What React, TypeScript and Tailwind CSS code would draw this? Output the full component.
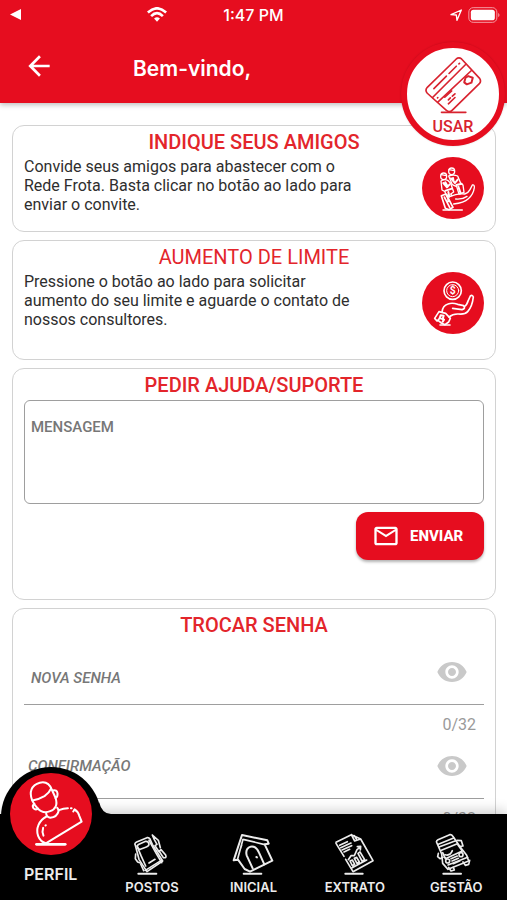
import React from 'react'
import { MdArrowBack, MdOutlineEmail, MdVisibility } from 'react-icons/md'

interface CardProps {
  title: string
  titleClass?: string
  className?: string
  children: React.ReactNode
}

const Card: React.FC<CardProps> = ({ title, titleClass = 'font-medium', className = '', children }) => (
  <section className={`rounded-xl border border-[#d2d2d2] px-[11px] pt-1 ${className}`}>
    <h2 className={`mb-[3px] text-center text-[20px] leading-6 text-[#e3252b] ${titleClass}`}>{title}</h2>
    {children}
  </section>
)

interface ActionCardProps {
  title: string
  titleClass?: string
  className?: string
  text: string
  label: string
  icon: React.ReactNode
}

const ActionCard: React.FC<ActionCardProps> = ({ title, titleClass, className, text, label, icon }) => (
  <Card title={title} titleClass={titleClass} className={className}>
    <div className="flex items-start justify-between">
      <p className="max-w-[345px] text-[16px] leading-[19px] text-[#2e2e2e]">{text}</p>
      <button type="button" aria-label={label} className="size-[62px] shrink-0 rounded-full bg-[#e60d1f] text-white">
        {icon}
      </button>
    </div>
  </Card>
)

interface PasswordFieldProps {
  id: string
  label: string
  className?: string
}

const PasswordField: React.FC<PasswordFieldProps> = ({ id, label, className = '' }) => (
  <div>
    <div className="flex h-[49px] items-start justify-between border-b border-[#9e9e9e] pr-4">
      <input
        id={id}
        type="password"
        maxLength={32}
        aria-label={label}
        placeholder={label}
        className={`h-8 flex-1 bg-transparent text-[15px] font-medium italic outline-none placeholder:text-[#777777] ${className}`}
      />
      <button type="button" aria-label="Mostrar senha" className="text-[#c9c9c9]">
        <MdVisibility size={32} />
      </button>
    </div>
    <p className="h-[45px] pt-2 pr-2 text-right text-[16px] leading-6 text-[#9a9a9a]">0/32</p>
  </div>
)

const WifiIcon = () => (
  <svg viewBox="0 0 60 46" className="h-[15px] w-5" fill="none" stroke="currentColor" strokeWidth="8">
    <path d="M2 17Q30-9 58 17" />
    <path d="M12 28Q30 10 48 28" />
    <path d="M21 35Q30 28 39 35L30 45Z" fill="currentColor" stroke="none" />
  </svg>
)

const CardIcon = () => (
  <svg viewBox="0 0 176 176" className="size-[58px] shrink-0" fill="none" stroke="#d8232f" strokeWidth="5" strokeLinecap="round" strokeLinejoin="round">
    <path d="M98 9L10 95Q2 104 10 113L68 165Q77 173 86 164L168 84Q175 76 168 67L114 9Q106 2 98 9Z" />
    <path d="M26 126L127 25M42 140L144 44" />
    <path d="M30 99L68 61M76 53L98 31M106 24L108 22" />
    <path d="M134 61L148 66L144 81L130 86L122 80L126 66Z" strokeWidth="6" />
    <path d="M63 125L84 106M74 133L80 127M86 122L94 115M74 145L94 126M41 127L42 126" />
    <path d="M53 171H127" />
  </svg>
)

const FriendsIcon = () => (
  <svg viewBox="0 0 186 186" className="size-full" fill="none" stroke="currentColor" strokeWidth="4" strokeLinecap="round" strokeLinejoin="round">
    <ellipse cx="65" cy="58" rx="9" ry="10" />
    <ellipse cx="89" cy="43" rx="9" ry="10" />
    <path d="M58 53L73 56M81 38L97 41" />
    <path d="M57 72Q67 65 77 70L86 79L95 105L86 111L90 116L75 120L68 103L60 99Z" />
    <path d="M80 57Q94 52 107 57L116 79L123 84L126 106L111 111L104 89L91 83Z" />
    <path d="M64 78L75 91L83 82M71 101L90 95M87 64L99 78L107 68M103 84L119 80M109 89L116 109M79 105L82 119M93 63L95 74M70 76L76 86" strokeWidth="6" />
    <path d="M58 116L72 111L93 151L81 158L70 154ZM67 120L83 151M76 114L79 133" strokeWidth="5" />
    <path d="M82 119L101 113Q112 110 128 111Q139 108 144 98L151 84Q158 82 157 92Q154 113 139 125Q126 137 95 141" />
    <path d="M101 126Q121 128 135 118" />
    <path d="M63 159H121" />
  </svg>
)

const CoinHandIcon = () => (
  <svg viewBox="0 0 186 186" className="size-full" fill="none" stroke="currentColor" strokeWidth="5" strokeLinecap="round" strokeLinejoin="round">
    <circle cx="92" cy="56" r="26" />
    <circle cx="92" cy="56" r="18" strokeWidth="3" />
    <text x="92" y="67" textAnchor="middle" fontSize="31" fontWeight="700" fill="currentColor" stroke="none">$</text>
    <path d="M60 120Q62 101 78 96Q91 91 107 97L125 101Q132 110 120 113L92 109" />
    <path d="M127 104Q135 99 139 85L145 72Q151 67 154 75Q151 103 137 119Q129 128 109 126Q93 125 81 135" />
    <path d="M51 119L38 139L45 147L53 139M51 119L71 124L85 139L80 150L69 158L58 153L49 146" />
    <path d="M56 130L65 131L62 141L53 138ZM66 143L62 149" strokeWidth="6" />
    <path d="M54 159H84" />
  </svg>
)

const ProfileIcon = () => (
  <svg viewBox="3 4 245 245" className="size-full" fill="none" stroke="currentColor" strokeWidth="6" strokeLinecap="round" strokeLinejoin="round">
    <path d="M69 85C60 62 66 40 92 33C112 28 122 38 128 54L139 78C146 99 139 113 123 118C105 126 92 117 84 108C77 101 73 94 69 85Z" />
    <path d="M70 86Q91 82 106 73Q120 64 126 50" />
    <path d="M131 56Q143 53 145 65Q146 76 139 79M76 96Q68 101 73 109Q79 116 87 110" />
    <path d="M111 123Q111 136 123 138Q144 135 148 118Q148 112 144 108" />
    <path d="M149 115Q163 109 176 109M185 109L187 109M196 113Q206 118 210 132L217 149L110 214" />
    <path d="M112 134C90 145 79 171 87 192Q94 210 110 214" />
    <path d="M102 168Q98 179 103 191M110 160L109 161M192 119L196 113" />
    <path d="M82 217H168" strokeWidth="8" />
  </svg>
)

const PumpIcon = () => (
  <svg viewBox="0 0 126 126" className="size-[42px]" fill="none" stroke="currentColor" strokeWidth="5" strokeLinecap="round" strokeLinejoin="round">
    <path d="M13 37Q9 31 17 27L48 14Q54 13 57 18L64 34L95 84L48 116L24 79Z" />
    <path d="M20 43Q17 37 24 34L44 25Q52 24 54 33Q54 39 46 42L28 49Q22 50 20 43Z" />
    <path d="M64 6L70 20L78 34L72 38L84 56L90 50L104 66Q108 76 97 74L84 54M64 6L82 22L88 44" />
    <path d="M18 39L30 68L44 99M54 22L76 62L92 89M14 63L13 77L20 87L26 89M29 93L38 113M43 112L91 82M54 90L72 79" />
    <path d="M22 122H76" strokeWidth="6" />
  </svg>
)

const HouseIcon = () => (
  <svg viewBox="0 0 126 126" className="size-[42px]" fill="none" stroke="currentColor" strokeWidth="6" strokeLinecap="round" strokeLinejoin="round">
    <path d="M30 6L106 22L110 32L98 34L121 83L54 116L38 108L18 80L5 82Z" />
    <path d="M33 19L16 81M33 19L95 34M26 46L29 36" strokeWidth="5" />
    <path d="M62 106L44 67Q39 47 56 41Q72 38 81 59L97 94" />
    <path d="M73 72L75 73" />
    <path d="M35 122H88" />
  </svg>
)

const ReportIcon = () => (
  <svg viewBox="0 0 126 126" className="size-[42px]" fill="none" stroke="currentColor" strokeWidth="5" strokeLinecap="round" strokeLinejoin="round">
    <path d="M6 28L52 5L80 18L117 83L57 116L35 79M30 70L6 31M52 5L62 24L80 18M61 8L67 18" />
    <path d="M17 37L40 26M20 44L51 30M24 51L53 38M30 57L47 49" />
    <path d="M43 80L51 68L61 68L69 50L78 43M70 41L80 40L79 51" />
    <path d="M48 84L55 81L62 94L55 98ZM61 76L68 73L76 87L69 91ZM72 61L78 57L92 80L84 84ZM53 105L98 81" />
    <path d="M34 122H86" strokeWidth="6" />
  </svg>
)

const TruckIcon = () => (
  <svg viewBox="0 0 126 126" className="size-[42px]" fill="none" stroke="currentColor" strokeWidth="5" strokeLinecap="round" strokeLinejoin="round">
    <path d="M5 28Q3 23 9 20L44 5Q50 4 53 9L74 40L95 67L101 84L39 109L23 91L20 63Z" />
    <path d="M10 34L56 15M12 42L62 23M19 52L67 32M23 59L31 77L82 54L69 36" />
    <path d="M30 65Q45 70 52 53M66 22L79 23L84 39L75 40M10 61L8 71L15 77L24 73" />
    <circle cx="38" cy="84" r="6" />
    <circle cx="78" cy="65" r="6" />
    <path d="M48 77L67 69M51 84L70 76M55 92L75 83M39 96L98 73M41 103L48 114L58 111L55 103M84 87L91 97L101 94L104 82" />
    <path d="M25 122H78" strokeWidth="6" />
  </svg>
)

const tabs = [
  { label: 'POSTOS', icon: <PumpIcon /> },
  { label: 'INICIAL', icon: <HouseIcon /> },
  { label: 'EXTRATO', icon: <ReportIcon /> },
  { label: 'GESTÃO', icon: <TruckIcon /> },
]

const StatusBar = () => (
  <div className="grid h-[29px] grid-cols-[1fr_auto_1fr] items-center px-[10px] text-white">
    <div className="flex items-center justify-between pr-14">
      <svg viewBox="0 0 11 11" className="size-[11px]" fill="currentColor">
        <path d="M0 5.5L11 0V11Z" />
      </svg>
      <WifiIcon />
    </div>
    <span className="font-[Inter,sans-serif] text-[16px] font-medium">1:47 PM</span>
    <div className="flex items-center justify-end gap-[6px]">
      <svg viewBox="0 0 36 36" className="size-3" fill="none" stroke="currentColor" strokeWidth="4" strokeLinejoin="round">
        <path d="M3 17L34 3L21 34L19 18Z" />
      </svg>
      <svg viewBox="0 0 98 48" className="-mr-1 h-4 w-[33px]">
        <rect x="2" y="2" width="84" height="44" rx="13" fill="none" stroke="#f59aa2" strokeWidth="3" />
        <rect x="8" y="8" width="72" height="32" rx="8" fill="white" />
        <path d="M90 17Q98 24 90 31Z" fill="#f59aa2" />
      </svg>
    </div>
  </div>
)

export default function App() {
  return (
    <div className="flex h-screen flex-col overflow-hidden bg-white font-[Roboto,sans-serif]">
      <header className="relative z-10 shrink-0 bg-[#e60d1f] shadow-[0_2px_5px_rgba(0,0,0,0.25)]">
        <StatusBar />
        <div className="flex h-[74px] items-center px-[23px] text-white">
          <button type="button" aria-label="Voltar">
            <MdArrowBack size={32} />
          </button>
          <h1 className="pt-[6px] pl-[78px] font-[Inter,sans-serif] text-[21px] leading-7 font-semibold">Bem-vindo,</h1>
        </div>
        <button
          type="button"
          className="absolute top-[42px] right-[2px] flex size-[104px] flex-col items-center gap-[3px] rounded-full border-6 border-[#e60d1f] bg-white pt-2 text-[16px] leading-5 font-medium text-[#d8232f] shadow-[0_0_2px_rgba(0,0,0,0.2)]"
        >
          <CardIcon />
          USAR
        </button>
      </header>

      <main className="flex flex-1 flex-col gap-2 overflow-y-auto pt-[22px] pr-[11px] pl-3 [scrollbar-width:none]">
        <ActionCard
          title="INDIQUE SEUS AMIGOS"
          className="pb-3"
          text="Convide seus amigos para abastecer com o Rede Frota. Basta clicar no botão ao lado para enviar o convite."
          label="Convidar amigos"
          icon={<FriendsIcon />}
        />
        <ActionCard
          title="AUMENTO DE LIMITE"
          titleClass="font-normal"
          className="pb-[25px]"
          text="Pressione o botão ao lado para solicitar aumento do seu limite e aguarde o contato de nossos consultores."
          label="Solicitar aumento de limite"
          icon={<CoinHandIcon />}
        />

        <Card title="PEDIR AJUDA/SUPORTE" className="pb-[39px]">
          <textarea
            aria-label="Mensagem"
            placeholder="MENSAGEM"
            className="block h-[104px] w-full resize-none rounded-md border border-[#9e9e9e] px-[6px] pt-4 text-[15px] leading-5 font-medium outline-none placeholder:text-[#777777]"
          />
          <div className="mt-2 flex justify-end">
            <button
              type="button"
              className="flex h-12 w-32 items-center gap-[10px] rounded-xl bg-[#e60d1f] pl-4 text-[15px] font-extrabold text-white shadow-[0_2px_3px_rgba(0,0,0,0.3)]"
            >
              <MdOutlineEmail size={28} />
              ENVIAR
            </button>
          </div>
        </Card>

        <Card title="TROCAR SENHA" className="shrink-0 pb-32">
          <div className="pt-4">
            <PasswordField id="nova-senha" label="NOVA SENHA" className="mt-[6px] pl-[7px]" />
            <PasswordField id="confirmacao" label="CONFIRMAÇÃO" className="pl-1" />
          </div>
        </Card>
      </main>

      <nav className="relative z-10 grid h-[86px] shrink-0 grid-cols-5 bg-black font-[Inter,sans-serif] font-semibold text-[#ececec] shadow-[0_-3px_12px_rgba(0,0,0,0.2)]">
        <a href="#perfil" className="flex flex-col items-center justify-end pb-4 text-[16px] leading-5">
          <span className="absolute -top-[47px] left-[1px] flex size-[100px] justify-center rounded-full bg-black pt-[6px]">
            <span className="size-[82px] rounded-full bg-[#e60d1f] text-white">
              <ProfileIcon />
            </span>
          </span>
          <svg viewBox="0 0 12 12" className="absolute -top-3 left-[99px] size-3">
            <path d="M0 0Q3 12 12 12H0Z" />
          </svg>
          <span className="relative">PERFIL</span>
        </a>
        {tabs.map(tab => (
          <a key={tab.label} href={`#${tab.label.toLowerCase()}`} className="flex flex-col items-center justify-end gap-1 pb-[5px] text-[13px] leading-4">
            {tab.icon}
            {tab.label}
          </a>
        ))}
      </nav>
    </div>
  )
}
